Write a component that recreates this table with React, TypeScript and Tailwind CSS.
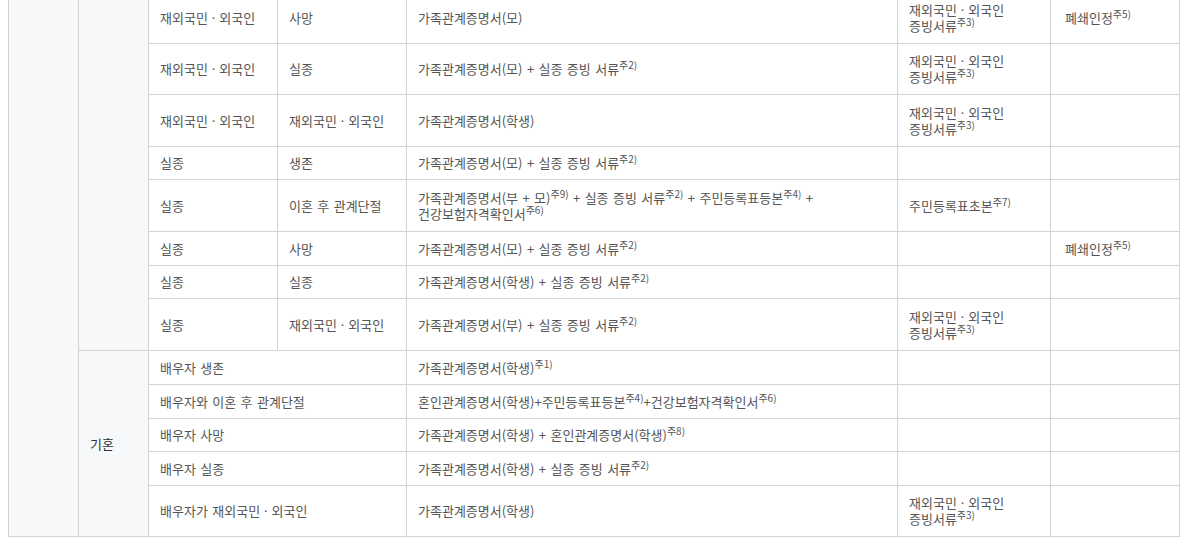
import React from "react";

const S = ({ n }: { n: string }) => <sup className="text-[10px] [word-spacing:0]">주{n})</sup>;

const td = "border border-[#d3d3d3] px-[11px] py-2 align-middle text-left";
const th = "border border-[#d3d3d3] bg-[#f7f8fa] px-[11px] py-2 align-middle text-left font-normal text-[#333]";

const Dot = () => (
  <span className="mx-[4px]" style={{ fontFamily: '"Noto Sans", sans-serif' }}>
    ·
  </span>
);

const Fx = () => (
  <>
    재외국민
    <Dot />
    외국인
  </>
);

const Proof = () => (
  <>
    <Fx />
    <br />
    증빙서류<S n="3" />
  </>
);

export default function App() {
  return (
    <div className="min-h-[546px] w-[1189px] overflow-hidden bg-white pl-2 pr-[10px]">
      <table
        className="-mt-[8px] w-[1171px] table-fixed border-collapse text-[13px] leading-[16px] text-[#555] [word-spacing:1.5px]"
        style={{ fontFamily: '"Noto Sans CJK KR", "Noto Sans", sans-serif' }}
      >
        <colgroup>
          <col className="w-[70px]" />
          <col className="w-[70px]" />
          <col className="w-[129px]" />
          <col className="w-[129px]" />
          <col className="w-[491px]" />
          <col className="w-[153px]" />
          <col className="w-[129px]" />
        </colgroup>
        <tbody>
          <tr className="h-[51px]">
            <th rowSpan={13} className={th}></th>
            <th rowSpan={8} className={th}></th>
            <td className={td}><Fx /></td>
            <td className={td}>사망</td>
            <td className={td}>가족관계증명서(모)</td>
            <td className={td}><Proof /></td>
            <td className={td + " pl-[14px]"}>폐쇄인정<S n="5" /></td>
          </tr>
          <tr className="h-[51px]">
            <td className={td}><Fx /></td>
            <td className={td}>실종</td>
            <td className={td}>가족관계증명서(모) + 실종 증빙 서류<S n="2" /></td>
            <td className={td}><Proof /></td>
            <td className={td}></td>
          </tr>
          <tr className="h-[52px]">
            <td className={td}><Fx /></td>
            <td className={td}><Fx /></td>
            <td className={td}>가족관계증명서(학생)</td>
            <td className={td}><Proof /></td>
            <td className={td}></td>
          </tr>
          <tr className="h-[33px]">
            <td className={td}>실종</td>
            <td className={td}>생존</td>
            <td className={td}>가족관계증명서(모) + 실종 증빙 서류<S n="2" /></td>
            <td className={td}></td>
            <td className={td}></td>
          </tr>
          <tr className="h-[52px]">
            <td className={td}>실종</td>
            <td className={td}>이혼 후 관계단절</td>
            <td className={td}>
              가족관계증명서(부 + 모)<S n="9" /> + 실종 증빙 서류<S n="2" /> + 주민등록표등본<S n="4" /> +
              <br />
              건강보험자격확인서<S n="6" />
            </td>
            <td className={td}>주민등록표초본<S n="7" /></td>
            <td className={td}></td>
          </tr>
          <tr className="h-[34px]">
            <td className={td}>실종</td>
            <td className={td}>사망</td>
            <td className={td}>가족관계증명서(모) + 실종 증빙 서류<S n="2" /></td>
            <td className={td}></td>
            <td className={td + " pl-[14px]"}>폐쇄인정<S n="5" /></td>
          </tr>
          <tr className="h-[33px]">
            <td className={td}>실종</td>
            <td className={td}>실종</td>
            <td className={td}>가족관계증명서(학생) + 실종 증빙 서류<S n="2" /></td>
            <td className={td}></td>
            <td className={td}></td>
          </tr>
          <tr className="h-[52px]">
            <td className={td}>실종</td>
            <td className={td}><Fx /></td>
            <td className={td}>가족관계증명서(부) + 실종 증빙 서류<S n="2" /></td>
            <td className={td}><Proof /></td>
            <td className={td}></td>
          </tr>
          <tr className="h-[34px]">
            <th rowSpan={5} className={th}>기혼</th>
            <td colSpan={2} className={td}>배우자 생존</td>
            <td className={td}>가족관계증명서(학생)<S n="1" /></td>
            <td className={td}></td>
            <td className={td}></td>
          </tr>
          <tr className="h-[34px]">
            <td colSpan={2} className={td}>배우자와 이혼 후 관계단절</td>
            <td className={td}>
              혼인관계증명서(학생)+주민등록표등본<S n="4" />+건강보험자격확인서<S n="6" />
            </td>
            <td className={td}></td>
            <td className={td}></td>
          </tr>
          <tr className="h-[33px]">
            <td colSpan={2} className={td}>배우자 사망</td>
            <td className={td}>가족관계증명서(학생) + 혼인관계증명서(학생)<S n="8" /></td>
            <td className={td}></td>
            <td className={td}></td>
          </tr>
          <tr className="h-[34px]">
            <td colSpan={2} className={td}>배우자 실종</td>
            <td className={td}>가족관계증명서(학생) + 실종 증빙 서류<S n="2" /></td>
            <td className={td}></td>
            <td className={td}></td>
          </tr>
          <tr className="h-[51px]">
            <td colSpan={2} className={td}>
              배우자가 <Fx />
            </td>
            <td className={td}>가족관계증명서(학생)</td>
            <td className={td}><Proof /></td>
            <td className={td}></td>
          </tr>
        </tbody>
      </table>
    </div>
  );
}
